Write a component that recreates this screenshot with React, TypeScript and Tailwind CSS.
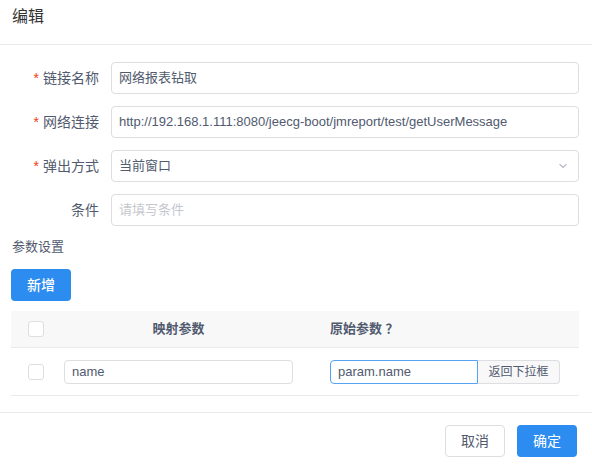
import React from "react";

const FONT = { fontFamily: '"Liberation Sans", "Noto Sans CJK SC", sans-serif' };

function Row({ label, required, children }: { label: string; required?: boolean; children: React.ReactNode }) {
  return (
    <div className="flex items-center h-[32px]">
      <div className="w-[99px] text-right text-[14px] text-[#515a6e] leading-[32px]">
        {required && <span className="text-[#ed4014] mr-[4px] text-[14px]">*</span>}
        {label}
      </div>
      <div className="ml-[12px] w-[468px] h-[32px]">{children}</div>
    </div>
  );
}

function Checkbox() {
  return <div className="w-[16px] h-[16px] rounded-[3px] border border-[#dcdee2] bg-white" />;
}

export default function App() {
  return (
    <div style={FONT} className="w-[592px] h-[465px] bg-white overflow-hidden">
      <div className="h-[45px] border-b border-[#e8eaec] px-[12px] pt-[6px]">
        <div className="text-[16px] leading-[22px] text-[#333333]">编辑</div>
      </div>
      <div className="pt-[17px] flex flex-col gap-[12px]">
        <Row label="链接名称" required>
          <div className="h-full border border-[#dcdee2] rounded-[4px] px-[7px] flex items-center text-[13px] text-[#515a6e]">网络报表钻取</div>
        </Row>
        <Row label="网络连接" required>
          <div className="h-full border border-[#dcdee2] rounded-[4px] px-[7px] flex items-center text-[13px] text-[#515a6e] whitespace-nowrap overflow-hidden">http://192.168.1.111:8080/jeecg-boot/jmreport/test/getUserMessage</div>
        </Row>
        <Row label="弹出方式" required>
          <div className="h-full border border-[#dcdee2] rounded-[4px] pl-[7px] pr-[9px] flex items-center justify-between text-[13px] text-[#515a6e]">
            <span>当前窗口</span>
            <svg width="12" height="12" viewBox="0 0 24 24" fill="none" stroke="#808695" strokeWidth="2" strokeLinecap="round" strokeLinejoin="round"><path d="M6 9l6 6 6-6" /></svg>
          </div>
        </Row>
        <Row label="条件">
          <div className="h-full border border-[#dcdee2] rounded-[4px] px-[7px] flex items-center text-[13px] text-[#c5c8ce]">请填写条件</div>
        </Row>
      </div>
      <div className="px-[12px] mt-[10px] text-[13px] leading-[22px] text-[#515a6e]">参数设置</div>
      <div className="px-[11px] mt-[11px]">
        <button className="w-[60px] h-[32px] rounded-[4px] bg-[#2d8cf0] text-white text-[14px] font-medium">新增</button>
      </div>
      <div className="mx-[11px] mt-[10px] w-[568px]">
        <div className="flex items-center h-[37px] bg-[#f8f8f9] border-b border-[#e8eaec] text-[13px] font-bold text-[#515a6e]">
          <div className="w-[41px] flex justify-end pr-[8px]"><Checkbox /></div>
          <div className="w-[253px] text-center">映射参数</div>
          <div className="pl-[25px]">原始参数 ？</div>
        </div>
        <div className="flex items-center h-[48px] border-b border-[#e8eaec] text-[13px] text-[#515a6e]">
          <div className="w-[41px] flex justify-end pr-[8px]"><Checkbox /></div>
          <div className="w-[253px] px-[12px]">
            <div className="h-[24px] border border-[#dcdee2] rounded-[4px] px-[7px] flex items-center">name</div>
          </div>
          <div className="pl-[25px] flex">
            <div className="w-[148px] h-[24px] border border-[#57a3f3] rounded-l-[4px] px-[7px] flex items-center">param.name</div>
            <div className="w-[82px] h-[24px] border border-l-0 border-[#dcdee2] bg-[#f8f8f9] rounded-r-[4px] flex items-center justify-center text-[12px]">返回下拉框</div>
          </div>
        </div>
      </div>
      <div className="mt-[16px] border-t border-[#e8eaec] flex justify-end gap-[12px] pr-[15px] pt-[12px]">
        <button className="w-[60px] h-[32px] rounded-[4px] border border-[#dcdee2] bg-white text-[#515a6e] text-[14px]">取消</button>
        <button className="w-[60px] h-[32px] rounded-[4px] bg-[#2d8cf0] text-white text-[14px]">确定</button>
      </div>
    </div>
  );
}
